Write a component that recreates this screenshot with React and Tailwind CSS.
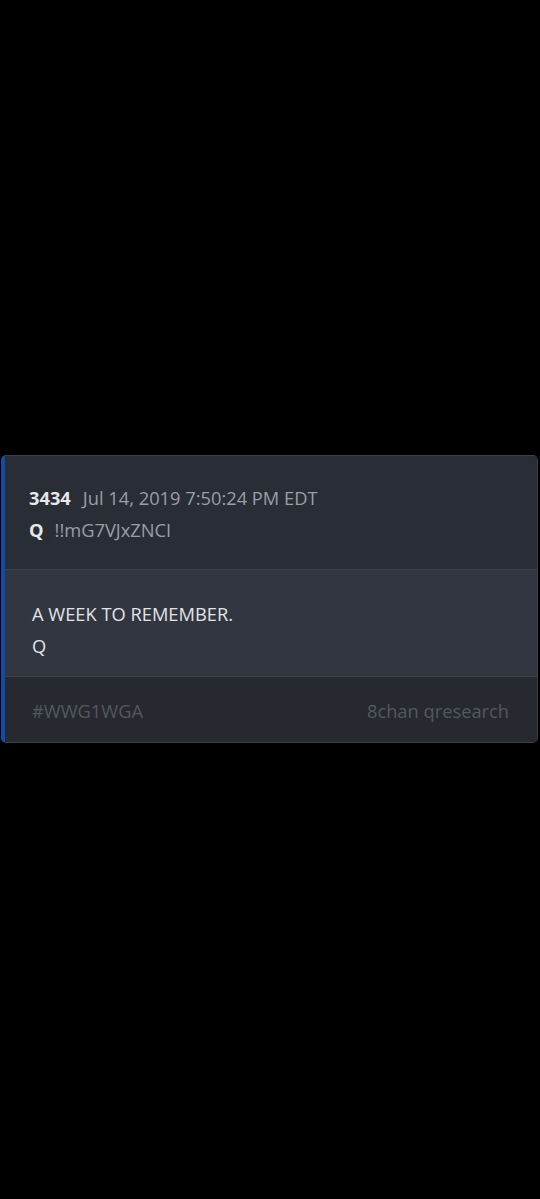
export default function App() {
  return (
    <div className="min-h-screen bg-black pt-[455px] font-['Open_Sans',sans-serif]">
      <div className="mx-[1px] w-[537px] overflow-hidden rounded-[5px] border border-[#3a3f48] border-l-[4px] border-l-[#0d4ea6]">
        {/* Header */}
        <div className="bg-[#292d35] pl-[24px] pr-6 pt-[26px] pb-[23px] border-b border-[#3d424c]">
          <div className="flex items-center gap-[12px] text-[18.3px] leading-[32px]">
            <span className="font-bold text-[#e8e8ea]">3434</span>
            <span className="text-[#9a9ea6]">Jul 14, 2019 7:50:24 PM EDT</span>
          </div>
          <div className="flex items-center gap-[11px] text-[18.3px] leading-[32px]">
            <span className="font-bold text-[#e8e8ea]">Q</span>
            <span className="text-[#9a9ea6]">!!mG7VJxZNCI</span>
          </div>
        </div>
        {/* Body */}
        <div className="bg-[#313640] pl-[27px] pr-6 pt-[28px] pb-[14px] border-b border-[#3d424c] text-[18.3px] leading-[32px] text-[#e2e3e6]">
          <p>A WEEK TO REMEMBER.</p>
          <p>Q</p>
        </div>
        {/* Footer */}
        <div className="flex items-center justify-between bg-[#262930] pl-[27px] pr-[28px] pt-[22px] pb-[19px] text-[18.3px] leading-[24px] text-[#535861]">
          <span>#WWG1WGA</span>
          <span>8chan qresearch</span>
        </div>
      </div>
    </div>
  );
}
